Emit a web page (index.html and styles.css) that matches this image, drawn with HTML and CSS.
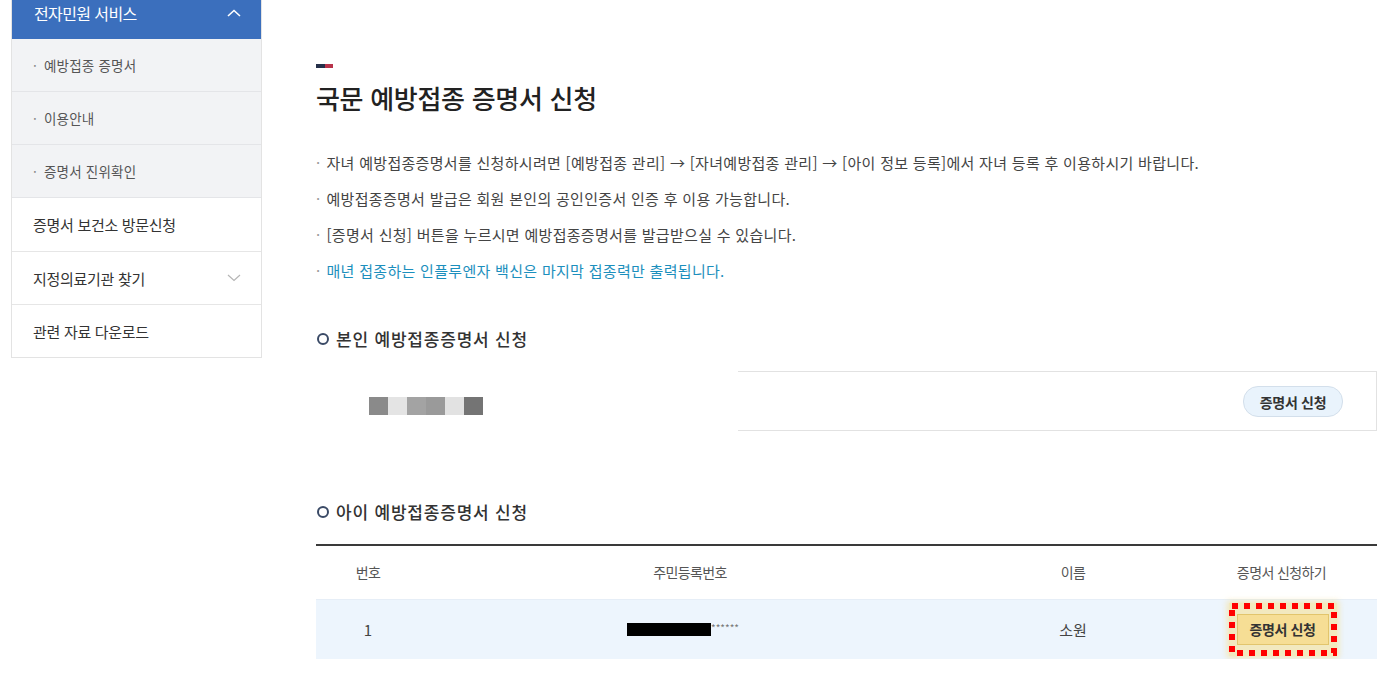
FILE: index.html
```html
<!DOCTYPE html>
<html lang="ko">
<head>
  <meta charset="UTF-8" />
  <meta name="viewport" content="width=device-width, initial-scale=1.0">
  <title>국문 예방접종 증명서 신청</title>
  <link rel="stylesheet" href="styles.css">
</head>
<body>
  <div class="page">

    <aside class="side">
      <div class="side-head">
        <span>전자민원 서비스</span>
        <svg class="chev" width="14" height="8" viewBox="0 0 14 8"><path d="M1 7 L7 1.5 L13 7" fill="none" stroke="#fff" stroke-width="1.6"/></svg>
      </div>
      <ul class="sub-menu">
        <li>예방접종 증명서</li>
        <li>이용안내</li>
        <li>증명서 진위확인</li>
      </ul>
      <ul class="main-menu">
        <li>증명서 보건소 방문신청</li>
        <li>
          <span>지정의료기관 찾기</span>
          <svg class="chev" width="14" height="8" viewBox="0 0 14 8"><path d="M1 1 L7 6.5 L13 1" fill="none" stroke="#b5b5b5" stroke-width="1.2"/></svg>
        </li>
        <li>관련 자료 다운로드</li>
      </ul>
    </aside>

    <main class="content">
      <div class="title-bar"><span class="navy"></span><span class="red"></span></div>
      <h1>국문 예방접종 증명서 신청</h1>

      <ul class="notice">
        <li>자녀 예방접종증명서를 신청하시려면 [예방접종 관리] → [자녀예방접종 관리] → [아이 정보 등록]에서 자녀 등록 후 이용하시기 바랍니다.</li>
        <li>예방접종증명서 발급은 회원 본인의 공인인증서 인증 후 이용 가능합니다.</li>
        <li>[증명서 신청] 버튼을 누르시면 예방접종증명서를 발급받으실 수 있습니다.</li>
        <li class="point">매년 접종하는 인플루엔자 백신은 마지막 접종력만 출력됩니다.</li>
      </ul>

      <h2><span class="ring"></span>본인 예방접종증명서 신청</h2>
      <div class="self-box">
        <div class="masked">
          <span class="px" style="background:#8a8a8a"></span>
          <span class="px" style="background:#e4e4e4"></span>
          <span class="px" style="background:#a3a3a3"></span>
          <span class="px" style="background:#9a9a9a"></span>
          <span class="px" style="background:#e2e2e2"></span>
          <span class="px" style="background:#747474"></span>
        </div>
        <div class="self-right">
          <button class="btn-pill">증명서 신청</button>
        </div>
      </div>

      <h2 class="child-title"><span class="ring"></span>아이 예방접종증명서 신청</h2>
      <table class="child-table">
        <colgroup>
          <col style="width:104px">
          <col style="width:540px">
          <col style="width:226px">
          <col>
        </colgroup>
        <thead>
          <tr>
            <th>번호</th>
            <th>주민등록번호</th>
            <th>이름</th>
            <th>증명서 신청하기</th>
          </tr>
        </thead>
        <tbody>
          <tr>
            <td>1</td>
            <td><span class="rrn"><span class="black"></span><span class="stars">******</span></span></td>
            <td>소원</td>
            <td>
              <span class="mark">
                <button class="btn-yellow">증명서 신청</button>
                <svg class="dots" width="108" height="53" viewBox="0 0 108 53"><rect x="3" y="3" width="102" height="47" fill="none" stroke="#f00" stroke-width="6" stroke-dasharray="6 6"/></svg>
              </span>
            </td>
          </tr>
        </tbody>
      </table>
    </main>

  </div>
</body>
</html>
```

FILE: styles.css
```css
* {
  box-sizing: border-box;
}
body {
  margin: 0;
  background: #fff;
  font-family: 'Noto Sans CJK KR', 'Noto Sans', sans-serif;
  color: #333;
}
ul {
  list-style: none;
  margin: 0;
  padding: 0;
}
.page {
  display: flex;
  align-items: flex-start;
}

/* sidebar */
.side {
  width: 251px;
  margin-left: 11px;
  border-left: 1px solid #e3e3e3;
  border-right: 1px solid #e3e3e3;
  border-bottom: 1px solid #e3e3e3;
}
.side-head {
  height: 39px;
  background: #3b6fbd;
  color: #fff;
  display: flex;
  justify-content: space-between;
  padding: 0 20px 14px 22px;
  align-items: center;
  font-size: 16px;
  letter-spacing: -0.6px;
}
.sub-menu {
  background: #f2f3f5;
}
.sub-menu li {
  height: 53px;
  line-height: 52px;
  padding-left: 21px;
  font-size: 13.5px;
  color: #555;
  letter-spacing: 0.2px;
  border-bottom: 1px solid #e4e5e8;
}
.sub-menu li::before {
  content: "·";
  color: #888;
  margin-right: 7px;
}
.main-menu li {
  height: 53px;
  padding: 0 20px 0 21px;
  display: flex;
  align-items: center;
  justify-content: space-between;
  font-size: 15px;
  color: #333;
  letter-spacing: -0.3px;
  border-top: 1px solid #e6e6e6;
}
.main-menu li:first-child {
  border-top: none;
}

/* content */
.content {
  width: 1061px;
  margin-left: 54px;
  padding-top: 64px;
}
.title-bar {
  display: flex;
  height: 4px;
}
.title-bar .navy {
  width: 9px;
  background: #25304a;
}
.title-bar .red {
  width: 8px;
  background: #b8334a;
}
h1 {
  margin: 13px 0 0;
  font-size: 26px;
  line-height: 34px;
  font-weight: 500;
  color: #222;
  letter-spacing: -0.3px;
}
.notice {
  margin-top: 30px;
}
.notice li {
  line-height: 36px;
  font-size: 15px;
  color: #444;
  letter-spacing: 0.3px;
}
.notice li::before {
  content: "·";
  color: #999;
  margin-right: 6px;
}
.notice li.point {
  color: #1c8fbd;
}
h2 {
  margin: 38px 0 0;
  font-size: 17px;
  line-height: 24px;
  font-weight: 500;
  color: #333;
  letter-spacing: 0.8px;
  display: flex;
  align-items: center;
}
.ring {
  width: 12px;
  height: 12px;
  border: 2px solid #3a4a66;
  border-radius: 50%;
  margin: 0 7px 0 1px;
}
.self-box {
  display: flex;
  margin-top: 20px;
  height: 60px;
}
.masked {
  width: 422px;
  display: flex;
  align-items: center;
  padding-left: 53px;
  padding-top: 10px;
}
.px {
  width: 19px;
  height: 18px;
}
.self-right {
  flex: 1;
  border: 1px solid #e2e2e2;
  border-left: none;
  display: flex;
  align-items: center;
  justify-content: flex-end;
  padding-right: 33px;
}
.btn-pill {
  font-family: inherit;
  width: 100px;
  height: 31px;
  border: 1px solid #d3dfeb;
  border-radius: 15px;
  background: #e9f3fc;
  color: #333;
  font-size: 14px;
  font-weight: 700;
  letter-spacing: -0.3px;
  margin-top: 1px;
}
h2.child-title {
  margin-top: 69px;
}
.child-table {
  width: 100%;
  margin-top: 20px;
  border-collapse: collapse;
  table-layout: fixed;
  border-top: 2px solid #3a3a3a;
}
.child-table th {
  height: 54px;
  font-size: 14px;
  font-weight: 400;
  color: #555;
  letter-spacing: -0.6px;
}
.child-table td {
  height: 60px;
  background: #edf5fd;
  text-align: center;
  font-size: 15px;
  color: #444;
  border-top: 1px solid #e6eef7;
}
.rrn {
  display: inline-flex;
  align-items: center;
  margin-right: 14px;
  margin-top: -6px;
}
.rrn .black {
  width: 84px;
  height: 13px;
  background: #000;
}
.rrn .stars {
  font-size: 10px;
  color: #777;
  letter-spacing: 0;
  margin-top: -3px;
}
.mark {
  position: relative;
  display: inline-flex;
  width: 108px;
  height: 53px;
  align-items: center;
  justify-content: center;
  margin-left: 2px;
  background: rgba(246, 222, 140, 0.55);
  box-shadow: 0 0 6px 2px rgba(246, 222, 140, 0.6);
}
.btn-yellow {
  font-family: inherit;
  width: 92px;
  height: 31px;
  border: 1px solid #e2c56c;
  background: #f6de95;
  color: #333;
  font-size: 14px;
  font-weight: 700;
  letter-spacing: -0.4px;
}
.dots {
  position: absolute;
  left: 0;
  top: 0;
}
```
